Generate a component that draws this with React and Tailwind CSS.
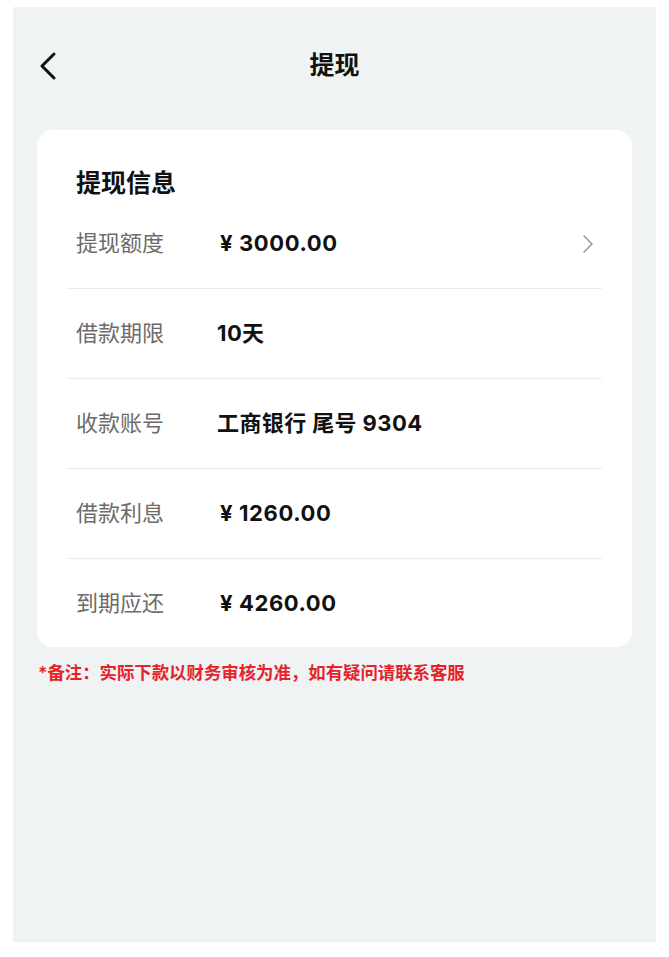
const ROWS = [
  { label: "提现额度", value: "¥ 3000.00", arrow: true },
  { label: "借款期限", value: "10天" },
  { label: "收款账号", value: "工商银行 尾号 9304" },
  { label: "借款利息", value: "¥ 1260.00" },
  { label: "到期应还", value: "¥ 4260.00" },
];

const FONT = { fontFamily: '"Inter", "Noto Sans CJK SC", sans-serif' };

function BackIcon() {
  return (
    <svg width="18" height="28" viewBox="0 0 18 28" fill="none">
      <path d="M15 2 L3 14 L15 26" stroke="#111" strokeWidth="3" strokeLinecap="round" strokeLinejoin="round" />
    </svg>
  );
}

function ArrowIcon() {
  return (
    <svg width="12" height="20" viewBox="0 0 12 20" fill="none">
      <path d="M2 2 L10 10 L2 18" stroke="#9a9a9a" strokeWidth="1.6" strokeLinecap="round" strokeLinejoin="round" />
    </svg>
  );
}

export default function App() {
  return (
    <div className="w-[669px] h-[957px] bg-white pt-[7px] px-[13px]" style={FONT}>
      <div className="h-[935px] bg-[#f0f3f4]">
        {/* top bar */}
        <header className="relative h-[118px] flex items-center justify-center">
          <button className="absolute left-[26px] top-[45px]">
            <BackIcon />
          </button>
          <h1 className="text-[25px] font-bold text-[#111]">提现</h1>
        </header>

        <div className="mx-6 mt-[5px] rounded-2xl bg-white pt-[37px] px-[30px]">
          <h2 className="pl-[9px] h-8 leading-8 text-[25px] font-bold text-[#111]">提现信息</h2>
          {ROWS.map((row, i) => (
            <div
              key={row.label}
              className={
                i < ROWS.length - 1
                  ? "h-[90px] flex items-center border-b border-[#ececec] pl-[9px] pr-[8px]"
                  : "h-[88px] flex items-center pl-[9px] pr-[8px]"
              }
            >
              <span className="w-[141px] shrink-0 text-[22px] text-[#6b6b6b]">{row.label}</span>
              <span
                className={
                  row.value.startsWith("¥")
                    ? "flex-1 pl-[3px] text-[22px] font-bold tracking-[0.6px] text-[#111]"
                    : "flex-1 text-[22px] font-bold tracking-[0.4px] text-[#111]"
                }
              >
                {row.value}
              </span>
              {row.arrow && <ArrowIcon />}
            </div>
          ))}
        </div>

        <p className="mt-[13px] pl-[25px] text-[17.4px] font-semibold text-[#e5232a]">
          *备注：实际下款以财务审核为准，如有疑问请联系客服
        </p>
      </div>
    </div>
  );
}
